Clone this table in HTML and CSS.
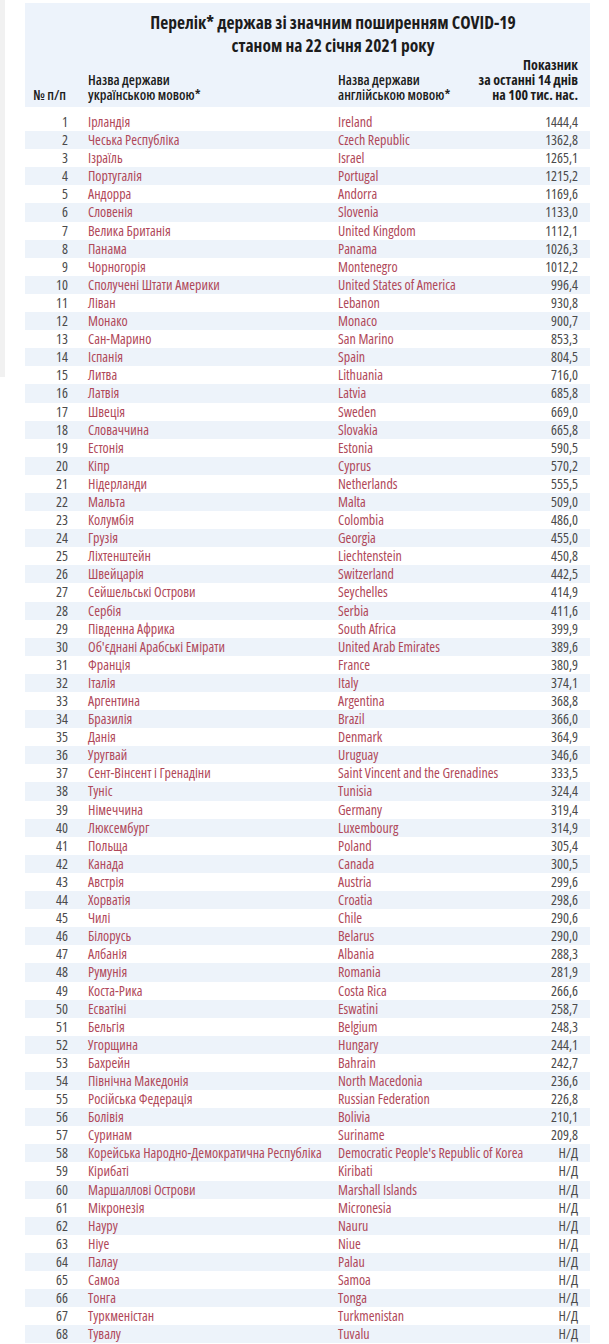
FILE: index.html
```html
<!DOCTYPE html>
<html lang="uk">
<head>
<meta charset="utf-8">
<title>Перелік держав зі значним поширенням COVID-19</title>
<link rel="stylesheet" href="styles.css">
</head>
<body>
<div class="sheet">
  <div class="head">
    <h1 class="title">Перелік* держав зі значним поширенням COVID-19<br>станом на 22 січня 2021 року</h1>
    <div class="cols">
      <div class="c-num">№ п/п</div>
      <div class="c-ua">Назва держави<br>українською мовою*</div>
      <div class="c-en">Назва держави<br>англійською мовою*</div>
      <div class="c-val">Показник<br>за останні 14 днів<br>на 100 тис. нас.</div>
    </div>
  </div>
  <div class="rows">
    <div class="row"><span class="num">1</span><span class="ua">Ірландія</span><span class="en">Ireland</span><span class="val">1444,4</span></div>
    <div class="row"><span class="num">2</span><span class="ua">Чеська Республіка</span><span class="en">Czech Republic</span><span class="val">1362,8</span></div>
    <div class="row"><span class="num">3</span><span class="ua">Ізраїль</span><span class="en">Israel</span><span class="val">1265,1</span></div>
    <div class="row"><span class="num">4</span><span class="ua">Португалія</span><span class="en">Portugal</span><span class="val">1215,2</span></div>
    <div class="row"><span class="num">5</span><span class="ua">Андорра</span><span class="en">Andorra</span><span class="val">1169,6</span></div>
    <div class="row"><span class="num">6</span><span class="ua">Словенія</span><span class="en">Slovenia</span><span class="val">1133,0</span></div>
    <div class="row"><span class="num">7</span><span class="ua">Велика Британія</span><span class="en">United Kingdom</span><span class="val">1112,1</span></div>
    <div class="row"><span class="num">8</span><span class="ua">Панама</span><span class="en">Panama</span><span class="val">1026,3</span></div>
    <div class="row"><span class="num">9</span><span class="ua">Чорногорія</span><span class="en">Montenegro</span><span class="val">1012,2</span></div>
    <div class="row"><span class="num">10</span><span class="ua">Сполучені Штати Америки</span><span class="en">United States of America</span><span class="val">996,4</span></div>
    <div class="row"><span class="num">11</span><span class="ua">Ліван</span><span class="en">Lebanon</span><span class="val">930,8</span></div>
    <div class="row"><span class="num">12</span><span class="ua">Монако</span><span class="en">Monaco</span><span class="val">900,7</span></div>
    <div class="row"><span class="num">13</span><span class="ua">Сан-Марино</span><span class="en">San Marino</span><span class="val">853,3</span></div>
    <div class="row"><span class="num">14</span><span class="ua">Іспанія</span><span class="en">Spain</span><span class="val">804,5</span></div>
    <div class="row"><span class="num">15</span><span class="ua">Литва</span><span class="en">Lithuania</span><span class="val">716,0</span></div>
    <div class="row"><span class="num">16</span><span class="ua">Латвія</span><span class="en">Latvia</span><span class="val">685,8</span></div>
    <div class="row"><span class="num">17</span><span class="ua">Швеція</span><span class="en">Sweden</span><span class="val">669,0</span></div>
    <div class="row"><span class="num">18</span><span class="ua">Словаччина</span><span class="en">Slovakia</span><span class="val">665,8</span></div>
    <div class="row"><span class="num">19</span><span class="ua">Естонія</span><span class="en">Estonia</span><span class="val">590,5</span></div>
    <div class="row"><span class="num">20</span><span class="ua">Кіпр</span><span class="en">Cyprus</span><span class="val">570,2</span></div>
    <div class="row"><span class="num">21</span><span class="ua">Нідерланди</span><span class="en">Netherlands</span><span class="val">555,5</span></div>
    <div class="row"><span class="num">22</span><span class="ua">Мальта</span><span class="en">Malta</span><span class="val">509,0</span></div>
    <div class="row"><span class="num">23</span><span class="ua">Колумбія</span><span class="en">Colombia</span><span class="val">486,0</span></div>
    <div class="row"><span class="num">24</span><span class="ua">Грузія</span><span class="en">Georgia</span><span class="val">455,0</span></div>
    <div class="row"><span class="num">25</span><span class="ua">Ліхтенштейн</span><span class="en">Liechtenstein</span><span class="val">450,8</span></div>
    <div class="row"><span class="num">26</span><span class="ua">Швейцарія</span><span class="en">Switzerland</span><span class="val">442,5</span></div>
    <div class="row"><span class="num">27</span><span class="ua">Сейшельські Острови</span><span class="en">Seychelles</span><span class="val">414,9</span></div>
    <div class="row"><span class="num">28</span><span class="ua">Сербія</span><span class="en">Serbia</span><span class="val">411,6</span></div>
    <div class="row"><span class="num">29</span><span class="ua">Південна Африка</span><span class="en">South Africa</span><span class="val">399,9</span></div>
    <div class="row"><span class="num">30</span><span class="ua">Об'єднані Арабські Емірати</span><span class="en">United Arab Emirates</span><span class="val">389,6</span></div>
    <div class="row"><span class="num">31</span><span class="ua">Франція</span><span class="en">France</span><span class="val">380,9</span></div>
    <div class="row"><span class="num">32</span><span class="ua">Італія</span><span class="en">Italy</span><span class="val">374,1</span></div>
    <div class="row"><span class="num">33</span><span class="ua">Аргентина</span><span class="en">Argentina</span><span class="val">368,8</span></div>
    <div class="row"><span class="num">34</span><span class="ua">Бразилія</span><span class="en">Brazil</span><span class="val">366,0</span></div>
    <div class="row"><span class="num">35</span><span class="ua">Данія</span><span class="en">Denmark</span><span class="val">364,9</span></div>
    <div class="row"><span class="num">36</span><span class="ua">Уругвай</span><span class="en">Uruguay</span><span class="val">346,6</span></div>
    <div class="row"><span class="num">37</span><span class="ua">Сент-Вінсент і Гренадіни</span><span class="en">Saint Vincent and the Grenadines</span><span class="val">333,5</span></div>
    <div class="row"><span class="num">38</span><span class="ua">Туніс</span><span class="en">Tunisia</span><span class="val">324,4</span></div>
    <div class="row"><span class="num">39</span><span class="ua">Німеччина</span><span class="en">Germany</span><span class="val">319,4</span></div>
    <div class="row"><span class="num">40</span><span class="ua">Люксембург</span><span class="en">Luxembourg</span><span class="val">314,9</span></div>
    <div class="row"><span class="num">41</span><span class="ua">Польща</span><span class="en">Poland</span><span class="val">305,4</span></div>
    <div class="row"><span class="num">42</span><span class="ua">Канада</span><span class="en">Canada</span><span class="val">300,5</span></div>
    <div class="row"><span class="num">43</span><span class="ua">Австрія</span><span class="en">Austria</span><span class="val">299,6</span></div>
    <div class="row"><span class="num">44</span><span class="ua">Хорватія</span><span class="en">Croatia</span><span class="val">298,6</span></div>
    <div class="row"><span class="num">45</span><span class="ua">Чилі</span><span class="en">Chile</span><span class="val">290,6</span></div>
    <div class="row"><span class="num">46</span><span class="ua">Білорусь</span><span class="en">Belarus</span><span class="val">290,0</span></div>
    <div class="row"><span class="num">47</span><span class="ua">Албанія</span><span class="en">Albania</span><span class="val">288,3</span></div>
    <div class="row"><span class="num">48</span><span class="ua">Румунія</span><span class="en">Romania</span><span class="val">281,9</span></div>
    <div class="row"><span class="num">49</span><span class="ua">Коста-Рика</span><span class="en">Costa Rica</span><span class="val">266,6</span></div>
    <div class="row"><span class="num">50</span><span class="ua">Есватіні</span><span class="en">Eswatini</span><span class="val">258,7</span></div>
    <div class="row"><span class="num">51</span><span class="ua">Бельгія</span><span class="en">Belgium</span><span class="val">248,3</span></div>
    <div class="row"><span class="num">52</span><span class="ua">Угорщина</span><span class="en">Hungary</span><span class="val">244,1</span></div>
    <div class="row"><span class="num">53</span><span class="ua">Бахрейн</span><span class="en">Bahrain</span><span class="val">242,7</span></div>
    <div class="row"><span class="num">54</span><span class="ua">Північна Македонія</span><span class="en">North Macedonia</span><span class="val">236,6</span></div>
    <div class="row"><span class="num">55</span><span class="ua">Російська Федерація</span><span class="en">Russian Federation</span><span class="val">226,8</span></div>
    <div class="row"><span class="num">56</span><span class="ua">Болівія</span><span class="en">Bolivia</span><span class="val">210,1</span></div>
    <div class="row"><span class="num">57</span><span class="ua">Суринам</span><span class="en">Suriname</span><span class="val">209,8</span></div>
    <div class="row"><span class="num">58</span><span class="ua">Корейська Народно-Демократична Республіка</span><span class="en">Democratic People's Republic of Korea</span><span class="val">Н/Д</span></div>
    <div class="row"><span class="num">59</span><span class="ua">Кірибаті</span><span class="en">Kiribati</span><span class="val">Н/Д</span></div>
    <div class="row"><span class="num">60</span><span class="ua">Маршаллові Острови</span><span class="en">Marshall Islands</span><span class="val">Н/Д</span></div>
    <div class="row"><span class="num">61</span><span class="ua">Мікронезія</span><span class="en">Micronesia</span><span class="val">Н/Д</span></div>
    <div class="row"><span class="num">62</span><span class="ua">Науру</span><span class="en">Nauru</span><span class="val">Н/Д</span></div>
    <div class="row"><span class="num">63</span><span class="ua">Ніуе</span><span class="en">Niue</span><span class="val">Н/Д</span></div>
    <div class="row"><span class="num">64</span><span class="ua">Палау</span><span class="en">Palau</span><span class="val">Н/Д</span></div>
    <div class="row"><span class="num">65</span><span class="ua">Самоа</span><span class="en">Samoa</span><span class="val">Н/Д</span></div>
    <div class="row"><span class="num">66</span><span class="ua">Тонга</span><span class="en">Tonga</span><span class="val">Н/Д</span></div>
    <div class="row"><span class="num">67</span><span class="ua">Туркменістан</span><span class="en">Turkmenistan</span><span class="val">Н/Д</span></div>
    <div class="row"><span class="num">68</span><span class="ua">Тувалу</span><span class="en">Tuvalu</span><span class="val">Н/Д</span></div>
  </div>
</div>
</body>
</html>
```
FILE: styles.css
```css
html, body {
  margin: 0;
  padding: 0;
}
body {
  background: #fff linear-gradient(#f1f1f1, #f1f1f1) no-repeat 0 0 / 5px 377px;
  font-family: "Open Sans", "Liberation Sans", sans-serif;
  font-stretch: condensed;
  color: #4a4a4a;
  overflow: hidden;
}
.sheet {
  margin: 3px 0 0 25px;
  width: 565px;
}
.head {
  background: #edf3fb;
  padding: 8px 0 5px;
  color: #1c1c1c;
}
.title {
  margin: 0;
  padding-left: 51px;
  font-size: 17.5px;
  line-height: 23px;
  font-weight: 700;
  text-align: center;
}
.cols,
.row {
  display: grid;
  grid-template-columns: 43px 270px minmax(0, 1fr) 130px;
  padding-right: 12px;
}
.cols {
  align-items: end;
  font-size: 14px;
  line-height: 15px;
  font-weight: 600;
  white-space: nowrap;
}
.c-num { text-align: right; padding-right: 2px; }
.c-ua { padding-left: 20px; }
.c-val { text-align: right; font-weight: 700; }
.rows {
  margin-top: 6px;
}
.row {
  height: 18.1px;
  align-items: center;
  font-size: 14px;
  line-height: 18.1px;
  white-space: nowrap;
}
.row:nth-child(even) {
  background: #edf3fa;
}
.num { text-align: right; color: #4a4a4a; }
.ua { padding-left: 20px; color: #b04859; }
.en { color: #b04859; }
.val { text-align: right; color: #4a4a4a; }
```
